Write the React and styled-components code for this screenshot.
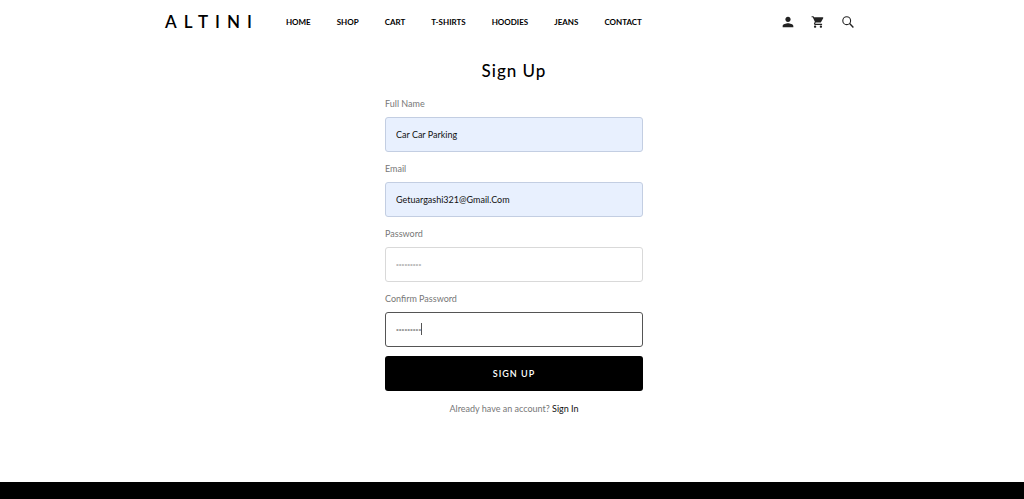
import React, { useState } from 'react';
import styled, { createGlobalStyle } from 'styled-components';
import { MdPerson, MdShoppingCart } from 'react-icons/md';

const GlobalStyle = createGlobalStyle`
  * {
    box-sizing: border-box;
  }

  body {
    margin: 0;
    background-color: #fff;
    color: #000;
    font-family: Lato, 'Liberation Sans', sans-serif;
  }
`;

const Page = styled.div`
  display: flex;
  flex-direction: column;
  min-height: 100vh;
`;

const Header = styled.header`
  display: flex;
  align-items: center;
  width: 100%;
  max-width: 710px;
  margin: 0 auto;
  padding: 10px 11px 10px 8px;
`;

const Logo = styled.a`
  margin-right: 27px;
  color: #000;
  font-size: 17px;
  font-weight: 600;
  line-height: 24px;
  letter-spacing: 7px;
  text-decoration: none;
`;

const Nav = styled.nav`
  display: flex;
  gap: 26px;
`;

const NavLink = styled.a`
  color: #000;
  font-size: 8px;
  font-weight: 700;
  line-height: 12px;
  text-decoration: none;
  text-transform: uppercase;
  white-space: nowrap;
`;

const Actions = styled.div`
  display: flex;
  gap: 14px;
  margin-left: auto;
`;

const IconButton = styled.button`
  display: flex;
  align-items: center;
  justify-content: center;
  width: 16px;
  height: 16px;
  padding: 0;
  border: none;
  background: none;
  color: #222;
  cursor: pointer;
`;

const Main = styled.main`
  flex: 1;
  padding: 15px 0 64px 4px;
`;

const Form = styled.form`
  display: flex;
  flex-direction: column;
  width: 100%;
  max-width: 258px;
  margin: 0 auto;
`;

const Title = styled.h1`
  margin: 0 0 15px;
  font-size: 17px;
  font-weight: 500;
  line-height: 24px;
  letter-spacing: 1px;
  text-align: center;
`;

const Field = styled.div`
  margin-bottom: ${(props) => (props.$last ? '9px' : '11px')};
`;

const Label = styled.label`
  display: block;
  margin-bottom: 7px;
  color: #777;
  font-size: 9px;
  line-height: 12px;
`;

const InputWrap = styled.div`
  position: relative;
`;

const Input = styled.input`
  display: block;
  width: 100%;
  height: 35px;
  padding: 0 10px;
  border: 1px solid ${(props) => (props.$filled ? '#c3cee2' : '#d9d9d9')};
  border-radius: 3px;
  background-color: ${(props) => (props.$filled ? '#e8f0fe' : '#fff')};
  color: #111;
  font-family: inherit;
  font-size: 9px;
  outline: none;
  text-transform: capitalize;

  &[type='password'] {
    color: #bbb;
    font-family: 'Liberation Sans', sans-serif;
    font-size: 8px;
    caret-color: transparent;
  }

  &[type='password']:focus {
    border-color: #555;
    color: #999;
  }
`;

const Caret = styled.span`
  position: absolute;
  top: 11px;
  left: 36px;
  width: 1px;
  height: 12px;
  background-color: #555;
`;

const SubmitButton = styled.button`
  height: 35px;
  border: none;
  border-radius: 3px;
  background-color: #000;
  color: #fff;
  font-family: inherit;
  font-size: 9px;
  font-weight: 600;
  letter-spacing: 1px;
  text-transform: uppercase;
  cursor: pointer;
`;

const Hint = styled.p`
  margin: 12px 0 0;
  color: #777;
  font-size: 9px;
  line-height: 12px;
  text-align: center;

  a {
    color: #111;
    text-decoration: none;
  }
`;

const Footer = styled.footer`
  height: 17px;
  background-color: #000;
`;

const SearchIcon = () => (
  <svg width="12" height="12" viewBox="0 0 12 12" fill="none" stroke="currentColor">
    <circle cx="4.7" cy="4.7" r="3.9" strokeWidth="1.1" />
    <path d="M7.6 7.6L11.4 11.4" strokeWidth="1.4" />
  </svg>
);

const links = ['Home', 'Shop', 'Cart', 'T-Shirts', 'Hoodies', 'Jeans', 'Contact'];

const fields = [
  { name: 'fullName', label: 'Full Name', type: 'text', filled: true },
  { name: 'email', label: 'Email', type: 'text', filled: true },
  { name: 'password', label: 'Password', type: 'password' },
  { name: 'confirmPassword', label: 'Confirm Password', type: 'password', last: true },
];

const App = () => {
  const [values, setValues] = useState({
    fullName: 'Car Car Parking',
    email: 'getuargashi321@Gmail.Com',
    password: 'secret123',
    confirmPassword: 'secret123',
  });

  const handleChange = (e) => {
    setValues({ ...values, [e.target.name]: e.target.value });
  };

  return (
    <Page>
      <GlobalStyle />
      <Header>
        <Logo href="#home">ALTINI</Logo>
        <Nav>
          {links.map((link) => (
            <NavLink key={link} href={`#${link.toLowerCase()}`}>
              {link}
            </NavLink>
          ))}
        </Nav>
        <Actions>
          <IconButton aria-label="Account">
            <MdPerson size={16} />
          </IconButton>
          <IconButton aria-label="Cart">
            <MdShoppingCart size={14} />
          </IconButton>
          <IconButton aria-label="Search">
            <SearchIcon />
          </IconButton>
        </Actions>
      </Header>
      <Main>
        <Form onSubmit={(e) => e.preventDefault()}>
          <Title>Sign Up</Title>
          {fields.map((field) => (
            <Field key={field.name} $last={field.last}>
              <Label htmlFor={field.name}>{field.label}</Label>
              <InputWrap>
                <Input
                  id={field.name}
                  name={field.name}
                  type={field.type}
                  value={values[field.name]}
                  onChange={handleChange}
                  $filled={field.filled}
                  autoFocus={field.last}
                />
                {field.last && <Caret />}
              </InputWrap>
            </Field>
          ))}
          <SubmitButton type="submit">Sign Up</SubmitButton>
          <Hint>
            Already have an account? <a href="#signin">Sign In</a>
          </Hint>
        </Form>
      </Main>
      <Footer />
    </Page>
  );
};

export default App;
